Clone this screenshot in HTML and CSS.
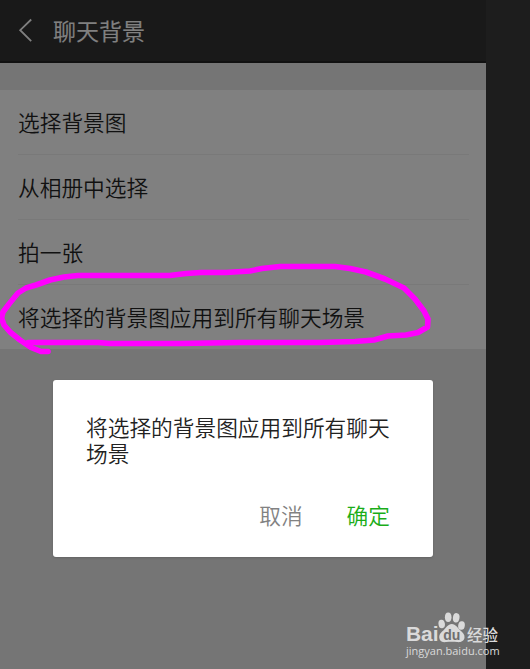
FILE: index.html
```html
<!DOCTYPE html>
<html lang="zh-CN">
<head>
<meta charset="utf-8">
<title>聊天背景</title>
<link rel="stylesheet" href="styles.css">
</head>
<body>
<main class="screen">
  <header class="topbar">
    <svg class="back" width="16" height="26" viewBox="0 0 16 26"><path d="M13.200 2.500 2.200 13.200l11 11"/></svg>
    <h1 class="title">聊天背景</h1>
  </header>
  <ul class="options">
    <li class="option">选择背景图</li>
    <li class="option">从相册中选择</li>
    <li class="option">拍一张</li>
    <li class="option">将选择的背景图应用到所有聊天场景</li>
  </ul>
  <section class="dialog">
    <p class="message">将选择的背景图应用到所有聊天场景</p>
    <div class="actions">
      <span class="cancel">取消</span>
      <span class="confirm">确定</span>
    </div>
  </section>
</main>
<svg class="marker" width="440" height="100" viewBox="0 260 440 100">
  <path d="M48 351.500H41L31 347.500 20 340 10 332 4 325 1.500 318 3 312 9 304 18 293 26 288 36 285 50 280 64 277 78 275.500H170L186 273.500 201 272.500H226L250 271 262 268.500 280 266.500H335L350 268.500 366 272 385 279 404 288 415 299 424 311 428 319 427.500 327 418 332.500 406 335 388 336 374 340 355 341.500 320 342.500H240L180 343.500H110L98 342.500H28"/>
</svg>
<div class="watermark">
  <div class="brand">
    <span class="latin">Bai</span>
    <svg class="paw" width="27" height="31" viewBox="0 0 27 31">
      <ellipse cx="3.700" cy="12" rx="3.200" ry="4.300" transform="rotate(-8 3.700 12)"/>
      <ellipse cx="10.200" cy="5.300" rx="3.300" ry="4.800"/>
      <ellipse cx="18.200" cy="5.800" rx="3.300" ry="4.700" transform="rotate(9 18.200 5.800)"/>
      <ellipse cx="23.500" cy="13.500" rx="3.300" ry="4.300" transform="rotate(8 23.500 13.500)"/>
      <path d="M13.800 12c4 0 5.800 4 8.400 6.200 2.700 2.200 4.700 4.400 4.300 7.600-.5 3.600-4.200 4.800-7.300 4.300-3.500-.6-7.300-.6-10.800 0-3.500.6-6.700-.8-7.100-4.200-.4-3.500 1.800-5.600 4.300-7.700 2.500-2.200 4.200-6.200 8.200-6.200Z"/>
      <text x="13.800" y="27.500">du</text>
    </svg>
    <span class="chinese">经验</span>
  </div>
  <div class="site">jingyan.baidu.com</div>
</div>
</body>
</html>
```
FILE: styles.css
```css
* {
  box-sizing: border-box;
}

body {
  position: relative;
  width: 530px;
  height: 669px;
  margin: 0;
  overflow: hidden;
  background: #1d1d1d;
  font-family: "Noto Sans CJK SC", sans-serif;
  font-weight: 350;
}

.screen {
  width: 486px;
  height: 669px;
  background: #757575;
}

.topbar {
  display: flex;
  align-items: center;
  height: 63px;
  padding: 0 0 1px 18px;
  background: #191919;
  border-bottom: 2px solid #111;
}

.back {
  flex: none;
  fill: none;
  stroke: #808080;
  stroke-width: 1.8;
}

.title {
  margin: 0 0 1px 19px;
  color: #808080;
  font-size: 23px;
  font-weight: 400;
  line-height: 30px;
  -webkit-text-stroke: 0.15px #808080;
}

.options {
  height: 259px;
  margin: 27px 0 0;
  padding: 0 17px 0 18px;
  background: #808080;
  list-style: none;
}

.option {
  height: 65px;
  border-bottom: 1px solid #797979;
  color: #111;
  font-size: 21.7px;
  line-height: 63px;
  white-space: nowrap;
}

.option:last-child {
  height: 64px;
  border-bottom: 0;
}

.dialog {
  display: flex;
  flex-direction: column;
  justify-content: space-between;
  width: 380px;
  height: 177px;
  margin: 31px 0 0 53px;
  padding: 34px 40px 26px 33px;
  border-radius: 3px;
  background: #fff;
  box-shadow: 0 1px 2px #5558;
  font-size: 21.7px;
}

.message {
  margin: 0;
  color: #222;
  line-height: 26px;
}

.actions {
  display: flex;
  justify-content: flex-end;
  gap: 44px;
  margin-right: 3px;
  line-height: 32px;
}

.cancel {
  color: #828282;
}

.confirm {
  color: #1aad19;
}

.marker {
  position: absolute;
  top: 260px;
  left: 0;
  fill: none;
  stroke: #f0f;
  stroke-width: 5.6;
  stroke-linecap: round;
  stroke-linejoin: round;
}

.watermark {
  position: absolute;
  top: 612px;
  left: 406px;
  color: #dadada;
}

.brand {
  display: flex;
  align-items: flex-end;
  height: 31px;
}

.latin {
  width: 32px;
  font: bold 21px/19px "Liberation Sans", sans-serif;
  letter-spacing: -0.1px;
}

.paw {
  flex: none;
  fill: #dadada;
}

.paw text {
  fill: #6e6e6e;
  font: bold 14px "Liberation Sans", sans-serif;
  text-anchor: middle;
}

.chinese {
  margin-left: 2px;
  font-size: 15.5px;
  font-weight: 500;
  line-height: 17px;
  white-space: nowrap;
}

.site {
  margin-top: 1px;
  font: 500 11px/14px "Open Sans", sans-serif;
  white-space: nowrap;
}
```
